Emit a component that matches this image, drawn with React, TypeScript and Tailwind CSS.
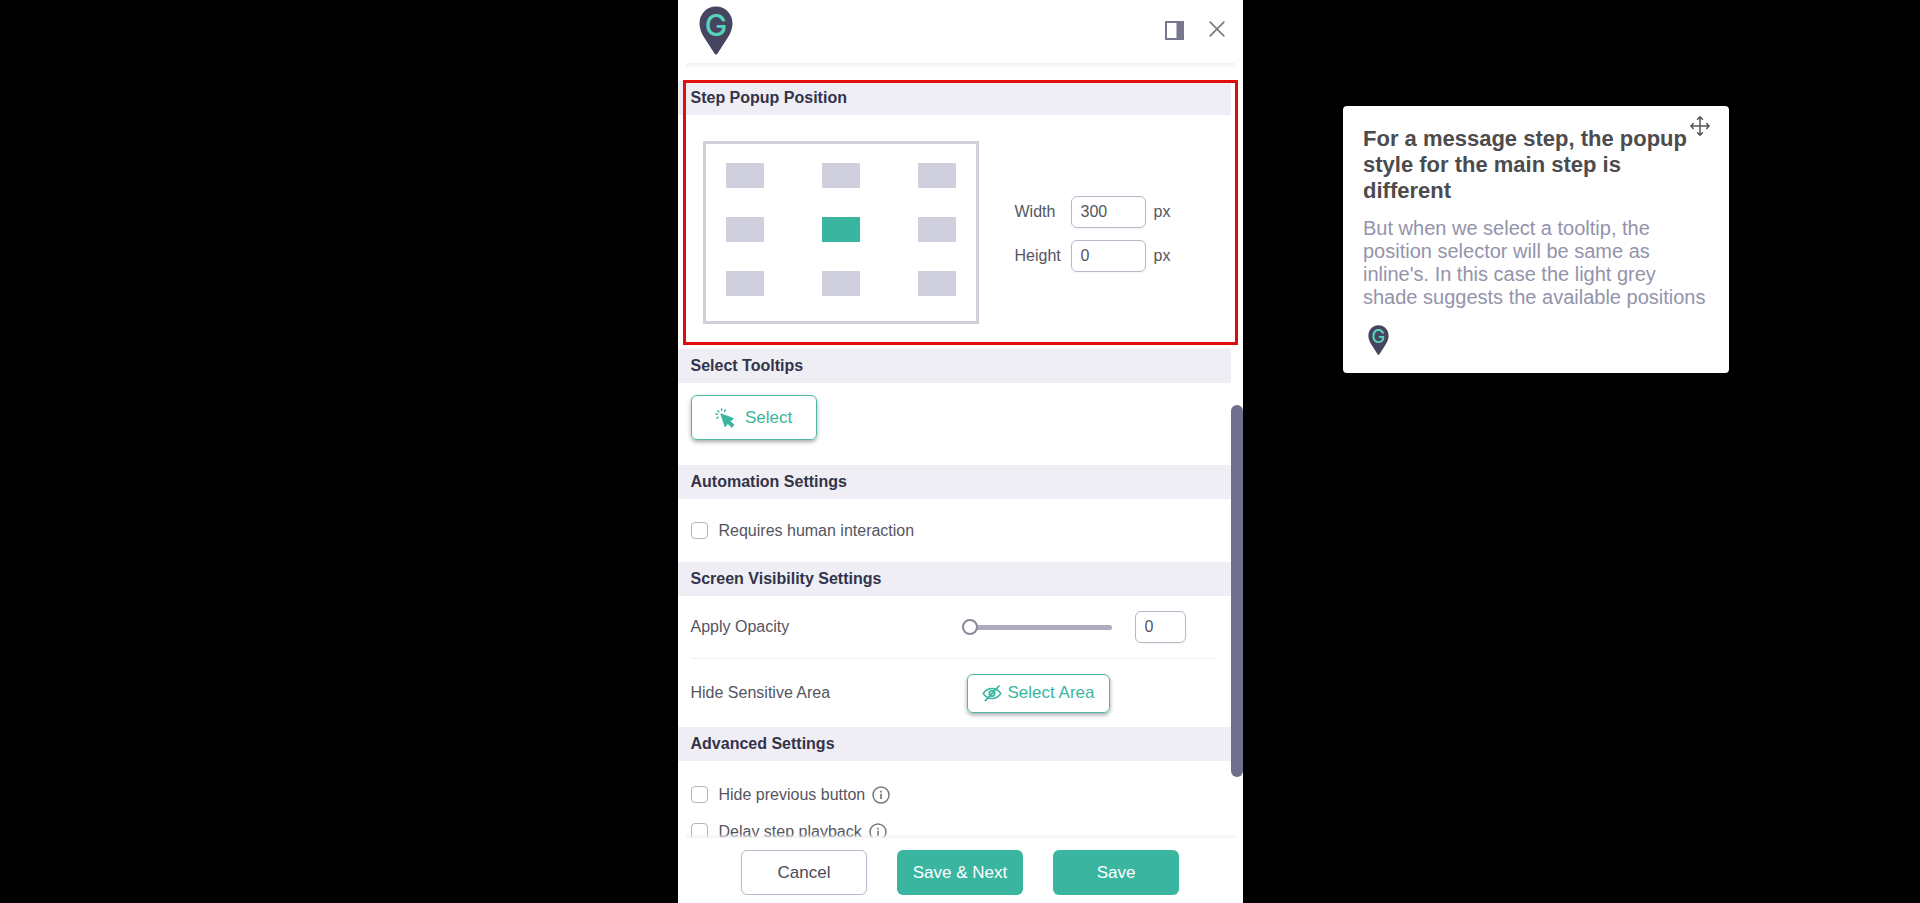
import { useState } from 'react';
import type { ReactNode } from 'react';

const positions = [
  'Top left',
  'Top center',
  'Top right',
  'Middle left',
  'Middle center',
  'Middle right',
  'Bottom left',
  'Bottom center',
  'Bottom right',
];

function PinLogo({ className }: { className: string }) {
  return (
    <svg viewBox="0 0 34 49" className={className} aria-hidden="true">
      <path
        d="M17 0.5C7.6 0.5 0.5 8 0.5 17.5c0 5.200 2.100 9.800 4.800 14.300L15.500 47.600c0.700 1.200 2.300 1.200 3 0L28.700 31.800c2.700-4.500 4.800-9.100 4.800-14.300C33.500 8 26.400 0.500 17 0.500z"
        fill="#45455f"
      />
      <text x="17" y="29.500" textAnchor="middle" fontFamily="Inter, sans-serif" fontWeight="500" fontSize="30" fill="#56d3bd">
        G
      </text>
    </svg>
  );
}

function DockIcon() {
  return (
    <svg viewBox="0 0 19 19" className="size-[19px]" aria-hidden="true">
      <rect x="1" y="1" width="17" height="17" fill="#fff" stroke="#77768f" strokeWidth="2" />
      <rect x="11.500" y="1" width="6.500" height="17" fill="#77768f" />
    </svg>
  );
}

function CloseIcon() {
  return (
    <svg viewBox="0 0 16 16" className="size-4" fill="none" stroke="#7c7c82" strokeWidth="1.700" strokeLinecap="round" aria-hidden="true">
      <path d="M1.200 1.200l13.600 13.600M14.800 1.200L1.200 14.800" />
    </svg>
  );
}

function CursorIcon() {
  return (
    <svg viewBox="0 0 20 20" className="size-5" aria-hidden="true">
      <path
        d="M5.800 5.800l12.700 4.700-3.300 2.800 3.800 3.700-2.300 2.200-3.900-3.700-2.800 3.300z"
        fill="#3ab5a0"
        stroke="#3ab5a0"
        strokeWidth="0.900"
        strokeLinejoin="round"
      />
      <path
        d="M3.800 3.800L2.900 2.800M6.600 2.200V1M9.500 3.400l0.900-1.300M2.200 6.300l-1.300-0.200M3 9.200l-1.100 0.900"
        fill="none"
        stroke="#3ab5a0"
        strokeWidth="1.500"
        strokeLinecap="round"
      />
    </svg>
  );
}

function HiddenIcon() {
  return (
    <svg viewBox="0 0 20 18" className="h-[18px] w-5" fill="none" stroke="#3ab5a0" strokeWidth="1.500" strokeLinecap="round" aria-hidden="true">
      <path d="M1.200 9.500C3.500 6 6.500 4.400 10 4.400s6.500 1.600 8.800 5.100c-2.300 3.400-5.300 5-8.800 5s-6.500-1.600-8.800-5z" />
      <circle cx="10" cy="9.400" r="2.800" fill="#3ab5a0" fillOpacity="0.350" />
      <path d="M17 2L3.300 16.600" strokeWidth="1.700" />
    </svg>
  );
}

function InfoIcon() {
  return (
    <svg viewBox="0 0 18 18" className="size-[18px]" fill="none" stroke="#77777f" aria-hidden="true">
      <circle cx="9" cy="9" r="8" strokeWidth="1.500" />
      <path d="M9 7.800v5.200" strokeWidth="1.700" />
      <path d="M9 4.700v1.700" strokeWidth="1.700" />
    </svg>
  );
}

function MoveIcon() {
  return (
    <svg
      viewBox="0 0 20 20"
      className="size-5"
      fill="none"
      stroke="#55555a"
      strokeWidth="1.500"
      strokeLinecap="round"
      strokeLinejoin="round"
      aria-hidden="true"
    >
      <path d="M10 1v18M1 10h18M7.500 3.300L10 0.900l2.500 2.400M7.500 16.700l2.500 2.400 2.500-2.400M3.300 7.500L0.900 10l2.400 2.500M16.700 7.500l2.400 2.500-2.400 2.500" />
    </svg>
  );
}

function Section({ title, children }: { title: string; children: ReactNode }) {
  return (
    <section className="relative">
      <h2 className="flex h-[34px] items-center bg-[#efeef5] pl-[13px] font-bold text-[#33334a]">{title}</h2>
      {children}
    </section>
  );
}

function SizeField({ id, label, value }: { id: string; label: string; value: string }) {
  return (
    <div className="flex items-center">
      <label htmlFor={id} className="w-14">
        {label}
      </label>
      <input
        id={id}
        type="text"
        defaultValue={value}
        className="h-8 w-[75px] rounded-md border border-[#b9b8c9] px-[9px] text-[#55555f] shadow-xs"
      />
      <span className="ml-2">px</span>
    </div>
  );
}

function CheckRow({ id, label, info }: { id: string; label: string; info?: boolean }) {
  return (
    <div className="flex h-[37px] items-center pl-[13px]">
      <input id={id} type="checkbox" className="size-[17px] appearance-none rounded border border-[#b4b3c4] bg-white checked:bg-[#3ab5a0]" />
      <label htmlFor={id} className="ml-[11px]">
        {label}
      </label>
      {info && (
        <button type="button" aria-label={`About: ${label}`} className="ml-[7px]">
          <InfoIcon />
        </button>
      )}
    </div>
  );
}

export default function App() {
  const [position, setPosition] = useState(4);
  const [opacity, setOpacity] = useState(0);

  return (
    <div className="relative min-h-screen bg-black font-['Liberation_Sans',Arial,sans-serif]">
      {/* Step editor panel */}
      <main className="mx-auto flex h-screen w-full max-w-[565px] flex-col bg-white text-base text-[#55555f]">
        <header className="relative z-10 flex h-[63px] shrink-0 items-start justify-between pt-1.5 pr-[18px] pl-[21px]">
          <PinLogo className="h-[49px] w-[34px]" />
          <div className="flex items-start gap-[25px] pt-[15px]">
            <button type="button" aria-label="Dock panel">
              <DockIcon />
            </button>
            <button type="button" aria-label="Close">
              <CloseIcon />
            </button>
          </div>
          <div className="absolute inset-x-2 top-full h-1.5 bg-linear-to-b from-[#f1f1f3] to-white" />
        </header>

        <div className="relative min-h-0 flex-1 overflow-hidden pt-[18px] pr-3">
          <Section title="Step Popup Position">
            <div className="flex items-center gap-9 pt-[26px] pb-[25px] pl-[25px]">
              <div className="grid h-[183px] w-[276px] grid-cols-[repeat(3,38px)] content-between justify-between border-3 border-[#d0d0dd] px-5 pt-[19px] pb-[25px]">
                {positions.map((name, index) => (
                  <button
                    key={name}
                    type="button"
                    aria-label={name}
                    aria-pressed={position === index}
                    onClick={() => setPosition(index)}
                    className={`h-[25px] ${position === index ? 'bg-[#3ab5a0]' : 'bg-[#cfcfde]'}`}
                  />
                ))}
              </div>
              <div className="flex flex-col gap-3 pt-0.5">
                <SizeField id="popup-width" label="Width" value="300" />
                <SizeField id="popup-height" label="Height" value="0" />
              </div>
            </div>
            <div className="pointer-events-none absolute -top-px -right-[7px] bottom-1 left-[5px] border-3 border-[#e00d0d]" />
          </Section>

          <Section title="Select Tooltips">
            <div className="pt-3 pb-[25px] pl-[13px]">
              <button
                type="button"
                className="flex h-[45px] w-[126px] items-center justify-center gap-2.5 rounded-md border border-[#4fb8a5] text-[17px] text-[#3ab5a0] shadow-[0_2px_4px_rgba(0,0,0,0.35)]"
              >
                <CursorIcon />
                Select
              </button>
            </div>
          </Section>

          <Section title="Automation Settings">
            <div className="py-[13px]">
              <CheckRow id="human-interaction" label="Requires human interaction" />
            </div>
          </Section>

          <Section title="Screen Visibility Settings">
            <div className="mr-3.5 ml-[13px] flex h-[63px] items-center border-b border-[#f1f1f5]">
              <label htmlFor="opacity" className="w-[271px]">
                Apply Opacity
              </label>
              <input
                id="opacity"
                type="range"
                min={0}
                max={100}
                value={opacity}
                onChange={(e) => setOpacity(Number(e.target.value))}
                className="h-4 w-[150px] appearance-none bg-transparent [&::-webkit-slider-runnable-track]:h-[5px] [&::-webkit-slider-runnable-track]:rounded-full [&::-webkit-slider-runnable-track]:bg-[#adabbd] [&::-webkit-slider-thumb]:-mt-[6px] [&::-webkit-slider-thumb]:size-4 [&::-webkit-slider-thumb]:appearance-none [&::-webkit-slider-thumb]:rounded-full [&::-webkit-slider-thumb]:border-2 [&::-webkit-slider-thumb]:border-[#8b8a98] [&::-webkit-slider-thumb]:bg-white"
              />
              <input
                type="text"
                aria-label="Opacity value"
                value={opacity}
                onChange={(e) => setOpacity(Number(e.target.value) || 0)}
                className="ml-[23px] h-8 w-[51px] rounded-md border border-[#b9b8c9] px-[9px] shadow-xs"
              />
            </div>
            <div className="flex h-[68px] items-center pl-[13px]">
              <span className="w-[276px]">Hide Sensitive Area</span>
              <button
                type="button"
                className="flex h-[39px] w-[143px] items-center justify-center gap-1.5 rounded-md border border-[#4fb8a5] text-[17px] text-[#3ab5a0] shadow-[0_2px_4px_rgba(0,0,0,0.35)]"
              >
                <HiddenIcon />
                Select Area
              </button>
            </div>
          </Section>

          <Section title="Advanced Settings">
            <div className="pt-[15px]">
              <CheckRow id="hide-previous" label="Hide previous button" info />
              <CheckRow id="delay-playback" label="Delay step playback" info />
            </div>
          </Section>

          {/* Scroll thumb */}
          <div className="absolute top-[342px] right-0 h-[372px] w-3 rounded-full bg-[#6f6e8c]" />
        </div>

        <footer className="relative flex shrink-0 justify-center gap-[30px] pt-3 pb-2 text-[17px]">
          <div className="absolute inset-x-2 bottom-full h-1 bg-linear-to-t from-[#f1f1f3] to-transparent" />
          <button type="button" className="h-[45px] w-[126px] rounded-md border border-[#b9b8c9] text-[#4a4a58]">
            Cancel
          </button>
          <button type="button" className="h-[45px] w-[126px] rounded-md bg-[#3ab5a0] text-white">
            Save &amp; Next
          </button>
          <button type="button" className="h-[45px] w-[126px] rounded-md bg-[#3ab5a0] text-white">
            Save
          </button>
        </footer>
      </main>

      {/* Floating step popup */}
      <aside className="absolute top-[106px] right-[191px] w-[386px] rounded bg-white px-5 pt-5 pb-[18px]">
        <h1 className="text-[22px] leading-[26px] font-bold text-[#4c4c4e]">
          For a message step, the popup style for the main step is different
        </h1>
        <p className="mt-[13px] text-xl leading-[23px] text-[#9393aa]">
          But when we select a tooltip, the position selector will be same as inline's. In this case the light grey shade
          suggests the available positions
        </p>
        <PinLogo className="mt-4 ml-[5px] h-[30px] w-[21px]" />
        <button type="button" aria-label="Move popup" className="absolute top-2.5 right-[19px]">
          <MoveIcon />
        </button>
      </aside>
    </div>
  );
}
